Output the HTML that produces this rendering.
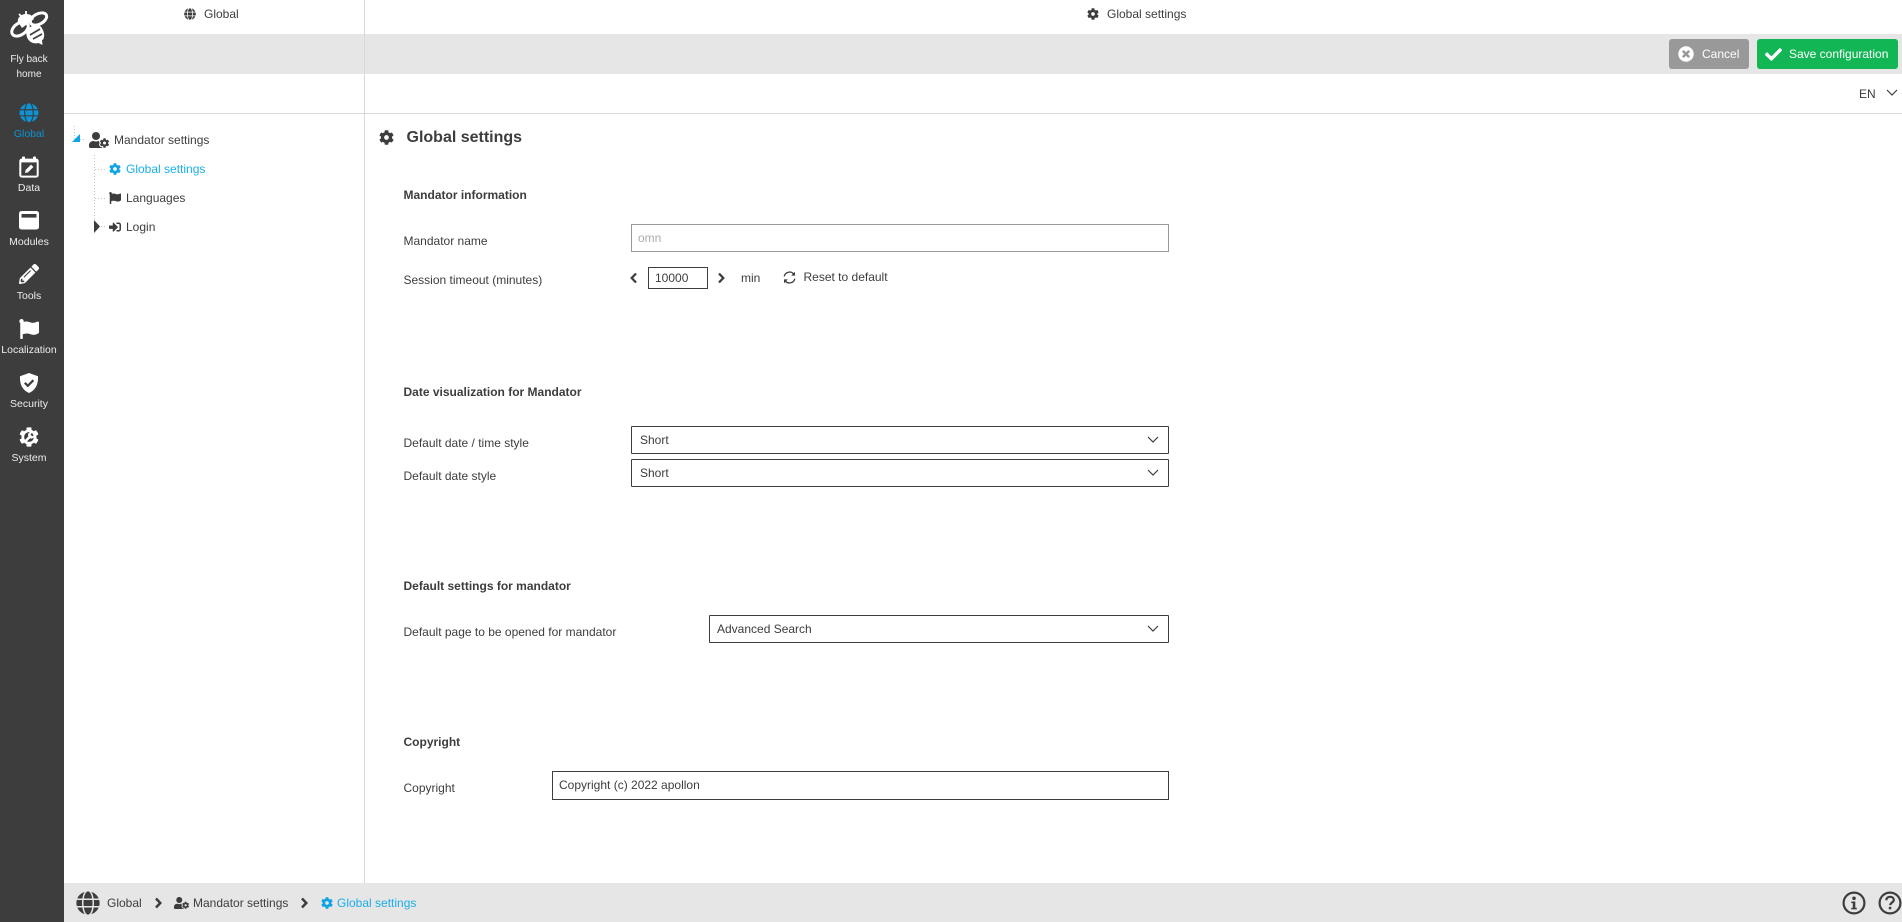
<!DOCTYPE html>
<html lang="en">
<head>
<meta charset="utf-8">
<title>Global settings</title>
<style>
html,body{margin:0;padding:0;width:1902px;height:922px;overflow:hidden;background:#fff}
body{position:relative;font-family:"Liberation Sans",sans-serif;font-size:12px;color:#3d3d3d}
.a{position:absolute}
.t{position:absolute;line-height:20px;height:20px;white-space:nowrap}
.n{position:absolute;left:0;width:58px;text-align:center;font-size:10.5px;line-height:16px;color:#eee;white-space:nowrap}
.b{font-weight:bold}
.box{position:absolute;box-sizing:border-box;border:1px solid #3d3d3d;background:#fff}
svg{position:absolute;display:block}
</style>
</head>
<body>
<!-- sidebar -->
<div class="a" style="left:0;top:0;width:64px;height:922px;background:#3d3d3d"></div>
<svg style="left:0;top:0" width="64" height="54" viewBox="0 0 64 54">
  <g fill="none" stroke="#fff" stroke-width="3">
    <ellipse cx="20" cy="29" rx="9.200" ry="5.800" transform="rotate(-35 20 29)"/>
    <ellipse cx="38.500" cy="19" rx="8.800" ry="5.200" transform="rotate(-28 38.500 19)"/>
  </g>
  <path d="M18 22c-1-4 3-8 8-8s6 2 8 5l-12 9z" fill="#fff"/>
  <path d="M21 16l-2-2M26 15l0-4" stroke="#fff" stroke-width="1.800"/>
  <path d="M27 30c2-3 9-7 12-5 3 2 6 8 5 12-.5 2-1 3-2 3l.500 5-4-2c-3 1-7 0-9-2-3-3-4-8-2.500-11z" fill="#fff"/>
  <path d="M30 35l10-6M33 39l9-5" stroke="#3d3d3d" stroke-width="1.700"/>
</svg>
<div class="n" style="top:52px;font-size:10px">Fly back</div>
<div class="n" style="top:67px;font-size:10px">home</div>

<svg style="left:19px;top:103px" width="20" height="19.500" viewBox="0 0 496 512"><path fill="#0d93d6" d="M336.5 160C322 70.7 287.8 8 248 8s-74 62.7-88.5 152h177zM152 256c0 22.2 1.2 43.5 3.3 64h185.3c2.1-20.5 3.3-41.8 3.3-64s-1.2-43.5-3.3-64H155.3c-2.1 20.5-3.3 41.8-3.3 64zm324.7-96c-28.6-67.9-86.5-120.4-158-141.6 24.4 33.8 41.2 84.7 50 141.6h108zM177.2 18.4C105.8 39.6 47.8 92.1 19.3 160h108c8.7-56.9 25.5-107.8 49.9-141.6zM487.4 192H372.7c2.1 21 3.3 42.5 3.3 64s-1.2 43-3.3 64h114.6c5.5-20.5 8.6-41.8 8.6-64s-3.1-43.5-8.5-64zM120 256c0-21.5 1.2-43 3.3-64H8.6C3.2 212.5 0 233.8 0 256s3.2 43.5 8.6 64h114.6c-2-21-3.2-42.5-3.2-64zm39.5 96c14.5 89.3 48.7 152 88.5 152s74-62.7 88.5-152h-177zm159.3 141.6c71.4-21.2 129.4-73.7 158-141.6h-108c-8.8 56.9-25.6 107.8-50 141.6zM19.3 352c28.6 67.9 86.5 120.4 158 141.6-24.4-33.8-41.2-84.7-50-141.6h-108z"/></svg>
<div class="n" style="top:126px;color:#0d93d6">Global</div>

<svg style="left:19px;top:156px" width="20" height="22" viewBox="0 0 20 22">
  <rect x="3" y="0.500" width="3" height="5" rx="1" fill="#fff"/><rect x="14" y="0.500" width="3" height="5" rx="1" fill="#fff"/>
  <rect x="1.300" y="3.600" width="17.400" height="17" rx="1.500" fill="#3d3d3d" stroke="#fff" stroke-width="2"/>
  <rect x="1" y="3" width="18" height="3.400" fill="#fff"/>
  <path d="M6 17l.6-3L12 8.600l2.400 2.400L9 16.400z" fill="#fff"/>
</svg>
<div class="n" style="top:180px">Data</div>

<svg style="left:19px;top:211px" width="20" height="19" viewBox="0 0 20 19">
  <rect x="0" y="0" width="20" height="18.500" rx="2.500" fill="#fff"/><rect x="2.500" y="3" width="15" height="3.600" fill="#3d3d3d"/>
</svg>
<div class="n" style="top:234px">Modules</div>

<svg style="left:19px;top:264px" width="20" height="20" viewBox="0 0 512 512"><path fill="#fff" d="M497.9 142.1l-46.1 46.1c-4.7 4.7-12.3 4.7-17 0l-111-111c-4.7-4.7-4.7-12.3 0-17l46.1-46.1c18.7-18.7 49.1-18.7 67.9 0l60.1 60.1c18.8 18.7 18.8 49.1 0 67.9zM284.2 99.8L21.6 362.4.4 483.9c-2.9 16.4 11.4 30.6 27.8 27.8l121.5-21.3 262.6-262.6c4.7-4.7 4.7-12.3 0-17l-111-111c-4.8-4.7-12.4-4.7-17.1 0zM124.1 339.9c-5.5-5.5-5.5-14.3 0-19.8l154-154c5.500-5.500 14.300-5.500 19.800 0s5.500 14.300 0 19.800l-154 154c-5.500 5.500-14.300 5.500-19.800 0zM88 424h48v36.300l-64.500 11.300-31.100-31.100L51.700 376H88v48z"/></svg>
<div class="n" style="top:288px">Tools</div>

<svg style="left:19px;top:319px" width="20" height="20" viewBox="0 0 512 512"><path fill="#fff" d="M349.565 98.783C295.978 98.783 251.721 64 184.348 64c-24.955 0-47.309 4.384-68.045 12.013a55.947 55.947 0 0 0 3.586-23.562C118.117 24.015 94.806 1.206 66.338.048 34.345-1.254 8 24.296 8 56c0 19.026 9.497 35.825 24 45.945V488c0 13.255 10.745 24 24 24h16c13.255 0 24-10.745 24-24v-94.400c28.311-12.064 63.582-22.122 114.435-22.122 53.588 0 97.844 34.783 165.217 34.783 48.169 0 86.667-16.294 122.505-40.858C506.840 359.452 512 349.571 512 339.045v-243.100c0-23.393-24.269-38.870-45.485-29.016-34.338 15.948-76.454 31.854-116.950 31.854z"/></svg>
<div class="n" style="top:342px">Localization</div>

<svg style="left:19px;top:373px" width="20" height="20" viewBox="0 0 20 20">
  <path d="M10 0L19 3.300c.4 7.500-2 13.500-9 16.700C3 16.800.6 10.800 1 3.300z" fill="#fff"/>
  <path d="M5.800 9.800l3 3 5.600-5.600" fill="none" stroke="#3d3d3d" stroke-width="2.200"/>
</svg>
<div class="n" style="top:396px">Security</div>

<svg style="left:19px;top:427px" width="20" height="20" viewBox="0 0 512 512">
  <path fill="#fff" d="M487.4 315.7l-42.6-24.6c4.3-23.2 4.3-47 0-70.2l42.6-24.6c4.9-2.8 7.1-8.600 5.500-14-11.100-35.600-30-67.800-54.700-94.600-3.800-4.100-10-5.100-14.800-2.300L380.800 110c-17.900-15.400-38.500-27.300-60.800-35.100V25.800c0-5.600-3.900-10.500-9.400-11.700-36.700-8.200-74.300-7.800-109.200 0-5.500 1.200-9.400 6.100-9.400 11.700V75c-22.200 7.900-42.800 19.800-60.800 35.100L88.700 85.500c-4.900-2.800-11-1.900-14.800 2.300-24.700 26.700-43.600 58.900-54.700 94.600-1.700 5.400.6 11.200 5.500 14L67.300 221c-4.300 23.200-4.300 47 0 70.200l-42.600 24.600c-4.900 2.800-7.100 8.600-5.500 14 11.100 35.600 30 67.800 54.700 94.600 3.800 4.100 10 5.100 14.800 2.300l42.600-24.600c17.900 15.400 38.500 27.300 60.800 35.100v49.200c0 5.600 3.900 10.500 9.400 11.700 36.700 8.200 74.300 7.800 109.200 0 5.500-1.200 9.400-6.100 9.400-11.700v-49.200c22.200-7.900 42.800-19.800 60.800-35.100l42.600 24.600c4.900 2.800 11 1.900 14.800-2.300 24.700-26.700 43.600-58.900 54.700-94.600 1.500-5.500-.7-11.300-5.600-14.100z"/>
  <circle cx="256" cy="256" r="125" fill="#3d3d3d"/>
  <path d="M165 365L275 250" stroke="#fff" stroke-width="62"/>
  <path d="M232 225a85 85 0 0 1 118-92l-52 50 16 38 42 12 48-48a85 85 0 0 1-128 96z" fill="#fff"/>
</svg>
<div class="n" style="top:450px">System</div>

<!-- layout structure -->
<div class="a" style="left:64px;top:34px;width:1838px;height:40px;background:#e6e6e6"></div>
<div class="a" style="left:64px;top:113px;width:1838px;height:1px;background:#d9d9d9"></div>
<div class="a" style="left:364px;top:0;width:1px;height:883px;background:#d9d9d9"></div>
<div class="a" style="left:64px;top:883px;width:1838px;height:39px;background:#e6e6e6"></div>

<!-- header -->
<svg style="left:184px;top:8px" width="12" height="12" viewBox="0 0 496 512"><path fill="#3d3d3d" d="M336.5 160C322 70.7 287.8 8 248 8s-74 62.7-88.5 152h177zM152 256c0 22.2 1.2 43.5 3.3 64h185.3c2.1-20.5 3.3-41.8 3.3-64s-1.2-43.5-3.3-64H155.3c-2.1 20.5-3.3 41.8-3.3 64zm324.7-96c-28.6-67.9-86.5-120.4-158-141.6 24.4 33.8 41.2 84.7 50 141.6h108zM177.2 18.4C105.8 39.6 47.8 92.1 19.3 160h108c8.7-56.9 25.5-107.8 49.9-141.6zM487.4 192H372.7c2.1 21 3.3 42.5 3.3 64s-1.2 43-3.3 64h114.6c5.5-20.5 8.6-41.8 8.6-64s-3.1-43.5-8.5-64zM120 256c0-21.5 1.2-43 3.3-64H8.6C3.2 212.5 0 233.8 0 256s3.2 43.5 8.6 64h114.6c-2-21-3.2-42.5-3.2-64zm39.5 96c14.5 89.3 48.7 152 88.5 152s74-62.7 88.5-152h-177zm159.3 141.6c71.4-21.2 129.4-73.7 158-141.6h-108c-8.8 56.9-25.6 107.8-50 141.6zM19.3 352c28.6 67.9 86.5 120.400 158 141.600-24.400-33.800-41.200-84.700-50-141.600h-108z"/></svg>
<div class="t" style="left:204px;top:4px">Global</div>
<svg style="left:1087px;top:8px" width="12" height="12" viewBox="0 0 512 512"><path fill="#3d3d3d" d="M487.4 315.7l-42.6-24.6c4.3-23.2 4.3-47 0-70.2l42.6-24.6c4.9-2.8 7.1-8.6 5.5-14-11.1-35.6-30-67.8-54.7-94.6-3.8-4.1-10-5.1-14.8-2.3L380.8 110c-17.9-15.4-38.5-27.3-60.8-35.1V25.8c0-5.6-3.9-10.5-9.4-11.7-36.7-8.2-74.3-7.8-109.2 0-5.5 1.2-9.4 6.1-9.4 11.7V75c-22.2 7.9-42.8 19.8-60.8 35.1L88.7 85.5c-4.9-2.8-11-1.9-14.8 2.3-24.7 26.7-43.6 58.9-54.7 94.6-1.7 5.4.6 11.2 5.5 14L67.3 221c-4.3 23.2-4.3 47 0 70.2l-42.6 24.6c-4.9 2.8-7.1 8.6-5.5 14 11.1 35.6 30 67.8 54.7 94.6 3.8 4.1 10 5.1 14.8 2.3l42.6-24.6c17.9 15.4 38.5 27.3 60.8 35.1v49.2c0 5.6 3.9 10.5 9.4 11.7 36.7 8.2 74.3 7.8 109.2 0 5.5-1.2 9.4-6.1 9.4-11.7v-49.2c22.2-7.9 42.8-19.8 60.8-35.1l42.6 24.6c4.9 2.8 11 1.9 14.8-2.3 24.7-26.7 43.6-58.9 54.7-94.6 1.5-5.5-.7-11.3-5.6-14.1zM256 336c-44.1 0-80-35.9-80-80s35.9-80 80-80 80 35.9 80 80-35.9 80-80 80z"/></svg>
<div class="t" style="left:1107px;top:4px">Global settings</div>

<!-- buttons -->
<div class="a" style="left:1669px;top:39px;width:80px;height:30px;background:#999;border-radius:3px"></div>
<svg style="left:1678px;top:46px" width="16" height="16" viewBox="0 0 512 512"><path fill="#fff" d="M256 8C119 8 8 119 8 256s111 248 248 248 248-111 248-248S393 8 256 8zm121.600 313.100c4.700 4.700 4.700 12.300 0 17L338 377.600c-4.700 4.700-12.300 4.700-17 0L256 312l-65.100 65.600c-4.700 4.700-12.300 4.700-17 0L134.400 338c-4.700-4.700-4.700-12.300 0-17l65.600-65-65.600-65.100c-4.700-4.700-4.700-12.300 0-17l39.600-39.600c4.700-4.700 12.300-4.700 17 0l65 65.700 65.100-65.600c4.700-4.700 12.300-4.700 17 0l39.600 39.600c4.700 4.700 4.700 12.300 0 17L312 256l65.600 65.100z"/></svg>
<div class="t" style="left:1702px;top:44px;color:#fff">Cancel</div>
<div class="a" style="left:1757px;top:39px;width:141px;height:30px;background:#13b655;border-radius:3px"></div>
<svg style="left:1765px;top:46px" width="17" height="17" viewBox="0 0 512 512"><path fill="#fff" d="M173.898 439.404l-166.400-166.400c-9.997-9.997-9.997-26.206 0-36.204l36.203-36.204c9.997-9.998 26.207-9.998 36.204 0L192 312.690 432.095 72.596c9.997-9.997 26.207-9.997 36.204 0l36.203 36.204c9.997 9.997 9.997 26.206 0 36.204l-294.400 294.401c-9.998 9.997-26.207 9.997-36.204-.001z"/></svg>
<div class="t" style="left:1789px;top:44px;color:#fff">Save configuration</div>

<div class="t" style="left:1859px;top:84px">EN</div>
<svg style="left:1886px;top:89px" width="12" height="8" viewBox="0 0 12 8"><path d="M1 1l5 5 5-5" fill="none" stroke="#3d3d3d" stroke-width="1.200"/></svg>

<!-- tree -->
<svg style="left:64px;top:120px" width="70" height="120" viewBox="0 0 70 120" shape-rendering="crispEdges">
  <g stroke="#c4c4c4" stroke-width="1" stroke-dasharray="1 2" fill="none">
    <path d="M10.500 6V22M16 19.500H21"/>
    <path d="M30.500 35V102M31 49.500H41M31 78.500H41M37 106.500H41"/>
  </g>
</svg>
<svg style="left:64px;top:120px" width="70" height="120" viewBox="0 0 70 120">
  <path d="M8 22l8-8v8z" fill="#0ca4e4"/>
  <path d="M30 100l6 6.500-6 6.500z" fill="#3d3d3d"/>
</svg>
<svg style="left:89px;top:132px" width="20" height="16" viewBox="0 0 640 512"><path fill="#3d3d3d" d="M610.500 373.300c2.600-14.100 2.600-28.500 0-42.600l25.800-14.900c3-1.700 4.300-5.200 3.300-8.500-6.700-21.600-18.200-41.200-33.200-57.400-2.300-2.500-6-3.100-9-1.400l-25.800 14.900c-10.900-9.300-23.400-16.500-36.900-21.300v-29.800c0-3.400-2.400-6.400-5.700-7.100-22.300-5-45-4.800-66.200 0-3.300.7-5.700 3.700-5.700 7.100v29.800c-13.500 4.800-26 12-36.900 21.300l-25.800-14.900c-2.900-1.700-6.700-1.100-9 1.400-15 16.200-26.500 35.800-33.200 57.400-1 3.300.4 6.800 3.300 8.500l25.800 14.900c-2.600 14.100-2.600 28.500 0 42.600l-25.800 14.900c-3 1.700-4.300 5.200-3.300 8.500 6.700 21.600 18.200 41.100 33.200 57.400 2.300 2.500 6 3.100 9 1.400l25.800-14.900c10.900 9.300 23.400 16.500 36.900 21.300v29.800c0 3.400 2.400 6.400 5.700 7.100 22.300 5 45 4.800 66.200 0 3.300-.7 5.700-3.700 5.700-7.100v-29.800c13.500-4.800 26-12 36.900-21.300l25.800 14.900c2.900 1.700 6.700 1.100 9-1.400 15-16.200 26.500-35.800 33.200-57.400 1-3.300-.4-6.800-3.300-8.500l-25.800-14.900zM496 400.500c-26.800 0-48.500-21.800-48.500-48.500s21.800-48.500 48.500-48.500 48.500 21.800 48.500 48.500-21.700 48.500-48.500 48.500zM224 256c70.700 0 128-57.300 128-128S294.700 0 224 0 96 57.300 96 128s57.300 128 128 128zm201.200 226.500c-2.300-1.200-4.600-2.600-6.800-3.900l-7.900 4.600c-6 3.400-12.800 5.300-19.600 5.300-10.900 0-21.400-4.600-28.900-12.600-18.300-19.800-32.300-43.900-40.200-69.600-5.500-17.700 1.900-36.400 17.900-45.700l7.900-4.600c-.1-2.600-.1-5.200 0-7.800l-7.900-4.600c-16-9.200-23.400-28-17.900-45.700.9-2.900 2.200-5.800 3.200-8.700-3.800-.3-7.500-1.200-11.400-1.200h-16.700c-22.200 10.200-46.900 16-72.900 16s-50.600-5.800-72.900-16h-16.700C60.200 288 0 348.200 0 422.400V464c0 26.500 21.500 48 48 48h352c10.100 0 19.500-3.200 27.200-8.500-1.200-3.800-2-7.700-2-11.800v-9.200z"/></svg>
<div class="t" style="left:114px;top:130px">Mandator settings</div>

<svg style="left:109px;top:163px" width="12" height="12" viewBox="0 0 512 512"><path fill="#0ca4e4" d="M487.4 315.7l-42.6-24.6c4.3-23.2 4.3-47 0-70.2l42.6-24.6c4.9-2.8 7.1-8.6 5.5-14-11.1-35.6-30-67.8-54.7-94.6-3.8-4.1-10-5.1-14.8-2.3L380.8 110c-17.9-15.4-38.5-27.3-60.8-35.1V25.8c0-5.6-3.9-10.5-9.4-11.7-36.7-8.2-74.3-7.8-109.2 0-5.5 1.2-9.4 6.1-9.4 11.7V75c-22.2 7.9-42.8 19.8-60.8 35.1L88.7 85.5c-4.9-2.8-11-1.9-14.8 2.3-24.7 26.7-43.6 58.9-54.7 94.6-1.7 5.4.6 11.2 5.5 14L67.3 221c-4.3 23.2-4.3 47 0 70.2l-42.6 24.6c-4.9 2.8-7.1 8.6-5.5 14 11.1 35.6 30 67.8 54.7 94.6 3.8 4.1 10 5.1 14.8 2.3l42.6-24.6c17.9 15.4 38.5 27.3 60.8 35.1v49.2c0 5.6 3.9 10.5 9.4 11.7 36.7 8.2 74.3 7.8 109.2 0 5.5-1.2 9.4-6.1 9.4-11.7v-49.2c22.2-7.9 42.8-19.8 60.8-35.1l42.6 24.6c4.9 2.8 11 1.9 14.8-2.3 24.7-26.7 43.6-58.9 54.7-94.6 1.5-5.5-.7-11.3-5.6-14.1zM256 336c-44.1 0-80-35.9-80-80s35.9-80 80-80 80 35.9 80 80-35.9 80-80 80z"/></svg>
<div class="t" style="left:126px;top:159px;color:#1aaeea">Global settings</div>

<svg style="left:109px;top:192px" width="12" height="12" viewBox="0 0 512 512"><path fill="#3d3d3d" d="M349.565 98.783C295.978 98.783 251.721 64 184.348 64c-24.955 0-47.309 4.384-68.045 12.013a55.947 55.947 0 0 0 3.586-23.562C118.117 24.015 94.806 1.206 66.338.048 34.345-1.254 8 24.296 8 56c0 19.026 9.497 35.825 24 45.945V488c0 13.255 10.745 24 24 24h16c13.255 0 24-10.745 24-24v-94.400c28.311-12.064 63.582-22.122 114.435-22.122 53.588 0 97.844 34.783 165.217 34.783 48.169 0 86.667-16.294 122.505-40.858C506.840 359.452 512 349.571 512 339.045v-243.100c0-23.393-24.269-38.870-45.485-29.016-34.338 15.948-76.454 31.854-116.950 31.854z"/></svg>
<div class="t" style="left:126px;top:188px">Languages</div>

<svg style="left:109px;top:221px" width="12" height="12" viewBox="0 0 512 512"><path fill="#3d3d3d" d="M416 448h-84c-6.600 0-12-5.400-12-12v-40c0-6.600 5.400-12 12-12h84c17.700 0 32-14.300 32-32V160c0-17.700-14.300-32-32-32h-84c-6.600 0-12-5.400-12-12V76c0-6.600 5.400-12 12-12h84c53 0 96 43 96 96v192c0 53-43 96-96 96zm-47-201L201 79c-15-15-41-4.500-41 17v96H24c-13.300 0-24 10.700-24 24v96c0 13.300 10.700 24 24 24h136v96c0 21.500 26 32 41 17l168-168c9.300-9.400 9.300-24.600 0-34z"/></svg>
<div class="t" style="left:126px;top:217px">Login</div>

<!-- main -->
<svg style="left:379px;top:130px" width="15" height="15" viewBox="0 0 512 512"><path fill="#3d3d3d" d="M487.4 315.7l-42.6-24.6c4.3-23.2 4.3-47 0-70.2l42.6-24.6c4.9-2.8 7.1-8.6 5.5-14-11.1-35.6-30-67.8-54.7-94.6-3.8-4.1-10-5.1-14.8-2.3L380.8 110c-17.9-15.4-38.5-27.3-60.8-35.1V25.8c0-5.6-3.9-10.5-9.4-11.7-36.7-8.2-74.3-7.8-109.2 0-5.5 1.2-9.4 6.1-9.4 11.7V75c-22.2 7.9-42.8 19.8-60.8 35.1L88.7 85.5c-4.9-2.8-11-1.9-14.8 2.3-24.7 26.7-43.6 58.9-54.7 94.6-1.7 5.4.6 11.2 5.5 14L67.3 221c-4.3 23.2-4.3 47 0 70.2l-42.6 24.6c-4.9 2.8-7.1 8.6-5.5 14 11.1 35.6 30 67.8 54.7 94.6 3.8 4.1 10 5.1 14.8 2.3l42.6-24.6c17.9 15.4 38.5 27.3 60.8 35.1v49.2c0 5.6 3.9 10.5 9.4 11.7 36.7 8.2 74.3 7.8 109.2 0 5.5-1.2 9.4-6.1 9.4-11.7v-49.2c22.2-7.9 42.8-19.8 60.8-35.1l42.6 24.6c4.9 2.8 11 1.9 14.8-2.3 24.7-26.7 43.6-58.9 54.7-94.6 1.5-5.5-.7-11.3-5.6-14.1zM256 336c-44.1 0-80-35.9-80-80s35.9-80 80-80 80 35.9 80 80-35.9 80-80 80z"/></svg>
<div class="t b" style="left:406.500px;top:128px;font-size:16px">Global settings</div>

<div class="t b" style="left:403.500px;top:185px">Mandator information</div>
<div class="t" style="left:403.500px;top:231px">Mandator name</div>
<div class="box" style="left:631px;top:224px;width:538px;height:28px;border-color:#999"></div>
<div class="t" style="left:638px;top:228px;color:#aaa">omn</div>

<div class="t" style="left:403.500px;top:270px">Session timeout (minutes)</div>
<svg style="left:630px;top:272px" width="8" height="12" viewBox="0 0 8 12"><path d="M6 1.500L1.700 6 6 10.500" fill="none" stroke="#3d3d3d" stroke-width="2.300"/></svg>
<div class="box" style="left:648px;top:267px;width:60px;height:22px"></div>
<div class="t" style="left:655px;top:268px">10000</div>
<svg style="left:717px;top:272px" width="8" height="12" viewBox="0 0 8 12"><path d="M2 1.500L6.300 6 2 10.500" fill="none" stroke="#3d3d3d" stroke-width="2.300"/></svg>
<div class="t" style="left:741px;top:268px">min</div>
<svg style="left:783px;top:271px" width="13" height="13" viewBox="0 0 13 13">
  <g fill="none" stroke="#3d3d3d" stroke-width="1.300"><path d="M1.200 5.400A5.400 5.400 0 0 1 10.800 3.200"/><path d="M11.800 7.600A5.400 5.400 0 0 1 2.200 9.800"/></g>
  <path d="M12 .8v3.800H8.200zM1 12.200V8.400h3.800z" fill="#3d3d3d"/>
</svg>
<div class="t" style="left:803.500px;top:267px">Reset to default</div>

<div class="t b" style="left:403.500px;top:382px">Date visualization for Mandator</div>
<div class="t" style="left:403.500px;top:433px">Default date / time style</div>
<div class="box" style="left:631px;top:426px;width:538px;height:28px;border-radius:1px"></div>
<div class="t" style="left:640px;top:429.500px">Short</div>
<svg style="left:1147px;top:436px" width="12" height="8" viewBox="0 0 12 8"><path d="M1 1l5 5 5-5" fill="none" stroke="#3d3d3d" stroke-width="1.200"/></svg>

<div class="t" style="left:403.500px;top:466px">Default date style</div>
<div class="box" style="left:631px;top:459px;width:538px;height:28px;border-radius:1px"></div>
<div class="t" style="left:640px;top:462.500px">Short</div>
<svg style="left:1147px;top:469px" width="12" height="8" viewBox="0 0 12 8"><path d="M1 1l5 5 5-5" fill="none" stroke="#3d3d3d" stroke-width="1.200"/></svg>

<div class="t b" style="left:403.500px;top:576px">Default settings for mandator</div>
<div class="t" style="left:403.500px;top:622px">Default page to be opened for mandator</div>
<div class="box" style="left:709px;top:615px;width:460px;height:28px;border-radius:1px"></div>
<div class="t" style="left:717px;top:619px">Advanced Search</div>
<svg style="left:1147px;top:625px" width="12" height="8" viewBox="0 0 12 8"><path d="M1 1l5 5 5-5" fill="none" stroke="#3d3d3d" stroke-width="1.200"/></svg>

<div class="t b" style="left:403.500px;top:732px">Copyright</div>
<div class="t" style="left:403.500px;top:778px">Copyright</div>
<div class="box" style="left:552px;top:771px;width:617px;height:29px"></div>
<div class="t" style="left:559px;top:775px">Copyright (c) 2022 apollon</div>

<!-- footer -->
<svg style="left:76px;top:891px" width="24" height="24" viewBox="0 0 496 512"><path fill="#3d3d3d" d="M336.5 160C322 70.7 287.8 8 248 8s-74 62.7-88.5 152h177zM152 256c0 22.2 1.2 43.5 3.3 64h185.3c2.1-20.5 3.3-41.8 3.3-64s-1.2-43.5-3.3-64H155.3c-2.1 20.5-3.3 41.8-3.3 64zm324.7-96c-28.6-67.9-86.5-120.4-158-141.6 24.4 33.8 41.2 84.7 50 141.6h108zM177.2 18.4C105.8 39.6 47.8 92.1 19.3 160h108c8.7-56.9 25.5-107.8 49.9-141.6zM487.4 192H372.7c2.1 21 3.3 42.5 3.3 64s-1.2 43-3.3 64h114.6c5.5-20.5 8.6-41.8 8.6-64s-3.1-43.5-8.5-64zM120 256c0-21.5 1.2-43 3.3-64H8.6C3.2 212.5 0 233.8 0 256s3.2 43.5 8.6 64h114.6c-2-21-3.2-42.5-3.2-64zm39.5 96c14.5 89.3 48.7 152 88.5 152s74-62.7 88.5-152h-177zm159.3 141.6c71.4-21.2 129.4-73.7 158-141.6h-108c-8.8 56.9-25.6 107.8-50 141.6zM19.3 352c28.6 67.9 86.5 120.4 158 141.6-24.4-33.8-41.2-84.7-50-141.6h-108z"/></svg>
<div class="t" style="left:107px;top:893px">Global</div>
<svg style="left:154px;top:897px" width="8" height="12" viewBox="0 0 8 12"><path d="M2 1.500L6.300 6 2 10.500" fill="none" stroke="#3d3d3d" stroke-width="2.500"/></svg>
<svg style="left:174px;top:897px" width="15" height="12" viewBox="0 0 640 512"><path fill="#3d3d3d" d="M610.500 373.300c2.600-14.100 2.600-28.500 0-42.600l25.800-14.900c3-1.700 4.300-5.200 3.300-8.500-6.700-21.600-18.200-41.200-33.200-57.400-2.300-2.500-6-3.100-9-1.400l-25.800 14.900c-10.900-9.300-23.400-16.500-36.900-21.300v-29.800c0-3.400-2.400-6.400-5.700-7.100-22.300-5-45-4.800-66.200 0-3.300.7-5.700 3.700-5.700 7.100v29.800c-13.500 4.800-26 12-36.900 21.300l-25.800-14.900c-2.900-1.700-6.700-1.100-9 1.400-15 16.200-26.500 35.800-33.200 57.400-1 3.300.4 6.800 3.300 8.500l25.800 14.900c-2.600 14.100-2.600 28.500 0 42.600l-25.800 14.900c-3 1.700-4.300 5.200-3.300 8.500 6.700 21.600 18.200 41.100 33.200 57.400 2.300 2.500 6 3.100 9 1.400l25.800-14.900c10.900 9.300 23.400 16.500 36.900 21.300v29.800c0 3.400 2.400 6.400 5.700 7.100 22.300 5 45 4.800 66.200 0 3.300-.7 5.700-3.700 5.700-7.100v-29.800c13.500-4.800 26-12 36.900-21.300l25.800 14.900c2.900 1.700 6.700 1.100 9-1.400 15-16.200 26.500-35.800 33.200-57.400 1-3.300-.4-6.800-3.300-8.500l-25.800-14.900zM496 400.500c-26.800 0-48.500-21.800-48.500-48.500s21.800-48.500 48.500-48.500 48.500 21.800 48.500 48.500-21.700 48.500-48.500 48.500zM224 256c70.700 0 128-57.300 128-128S294.700 0 224 0 96 57.300 96 128s57.300 128 128 128zm201.200 226.500c-2.300-1.200-4.600-2.600-6.800-3.900l-7.900 4.600c-6 3.400-12.800 5.300-19.600 5.300-10.900 0-21.400-4.600-28.900-12.600-18.300-19.800-32.300-43.900-40.200-69.600-5.500-17.700 1.900-36.400 17.900-45.700l7.900-4.600c-.1-2.600-.1-5.200 0-7.800l-7.900-4.600c-16-9.200-23.400-28-17.900-45.700.9-2.900 2.200-5.800 3.200-8.700-3.800-.3-7.500-1.200-11.400-1.200h-16.700c-22.200 10.200-46.900 16-72.900 16s-50.600-5.800-72.900-16h-16.700C60.200 288 0 348.200 0 422.400V464c0 26.500 21.500 48 48 48h352c10.100 0 19.500-3.200 27.200-8.500-1.200-3.800-2-7.700-2-11.800v-9.200z"/></svg>
<div class="t" style="left:193px;top:893px">Mandator settings</div>
<svg style="left:300px;top:897px" width="8" height="12" viewBox="0 0 8 12"><path d="M2 1.500L6.300 6 2 10.500" fill="none" stroke="#3d3d3d" stroke-width="2.500"/></svg>
<svg style="left:321px;top:897px" width="12" height="12" viewBox="0 0 512 512"><path fill="#0ca4e4" d="M487.4 315.7l-42.6-24.6c4.3-23.2 4.3-47 0-70.2l42.6-24.6c4.9-2.8 7.1-8.6 5.5-14-11.1-35.6-30-67.8-54.7-94.6-3.8-4.1-10-5.1-14.8-2.3L380.8 110c-17.9-15.4-38.5-27.3-60.8-35.1V25.8c0-5.6-3.9-10.5-9.4-11.7-36.7-8.2-74.3-7.8-109.2 0-5.5 1.2-9.4 6.1-9.4 11.7V75c-22.2 7.9-42.8 19.8-60.8 35.1L88.7 85.5c-4.9-2.8-11-1.9-14.8 2.3-24.7 26.7-43.6 58.9-54.7 94.6-1.7 5.4.6 11.2 5.5 14L67.3 221c-4.3 23.2-4.3 47 0 70.2l-42.6 24.6c-4.9 2.8-7.1 8.6-5.5 14 11.1 35.6 30 67.8 54.7 94.6 3.8 4.1 10 5.1 14.8 2.3l42.6-24.6c17.9 15.4 38.5 27.3 60.8 35.1v49.2c0 5.6 3.9 10.5 9.4 11.7 36.7 8.2 74.3 7.8 109.2 0 5.5-1.2 9.4-6.1 9.4-11.7v-49.2c22.2-7.9 42.8-19.8 60.8-35.1l42.6 24.6c4.9 2.8 11 1.9 14.8-2.3 24.7-26.7 43.6-58.9 54.7-94.6 1.5-5.5-.7-11.3-5.6-14.1zM256 336c-44.1 0-80-35.9-80-80s35.9-80 80-80 80 35.9 80 80-35.9 80-80 80z"/></svg>
<div class="t" style="left:337px;top:893px;color:#1aaeea">Global settings</div>

<svg style="left:1842px;top:891px" width="24" height="24" viewBox="0 0 24 24">
  <circle cx="12" cy="12" r="10.400" fill="none" stroke="#3d3d3d" stroke-width="2.200"/>
  <circle cx="12" cy="7.300" r="1.800" fill="#3d3d3d"/>
  <path d="M9.300 10.500h4v6.300h1.500v1.600H9.300v-1.600h1.500v-4.700H9.300z" fill="#3d3d3d"/>
</svg>
<svg style="left:1878px;top:891px" width="24" height="24" viewBox="0 0 24 24">
  <circle cx="12" cy="12" r="10.400" fill="none" stroke="#3d3d3d" stroke-width="2.200"/>
  <path d="M8.300 9.300c0-2.200 1.600-3.500 3.800-3.500s3.700 1.300 3.700 3.100c0 2.600-3.500 2.700-3.500 5.200" fill="none" stroke="#3d3d3d" stroke-width="2.200"/>
  <rect x="10.800" y="15.800" width="2.500" height="2.500" fill="#3d3d3d"/>
</svg>
</body>
</html>
